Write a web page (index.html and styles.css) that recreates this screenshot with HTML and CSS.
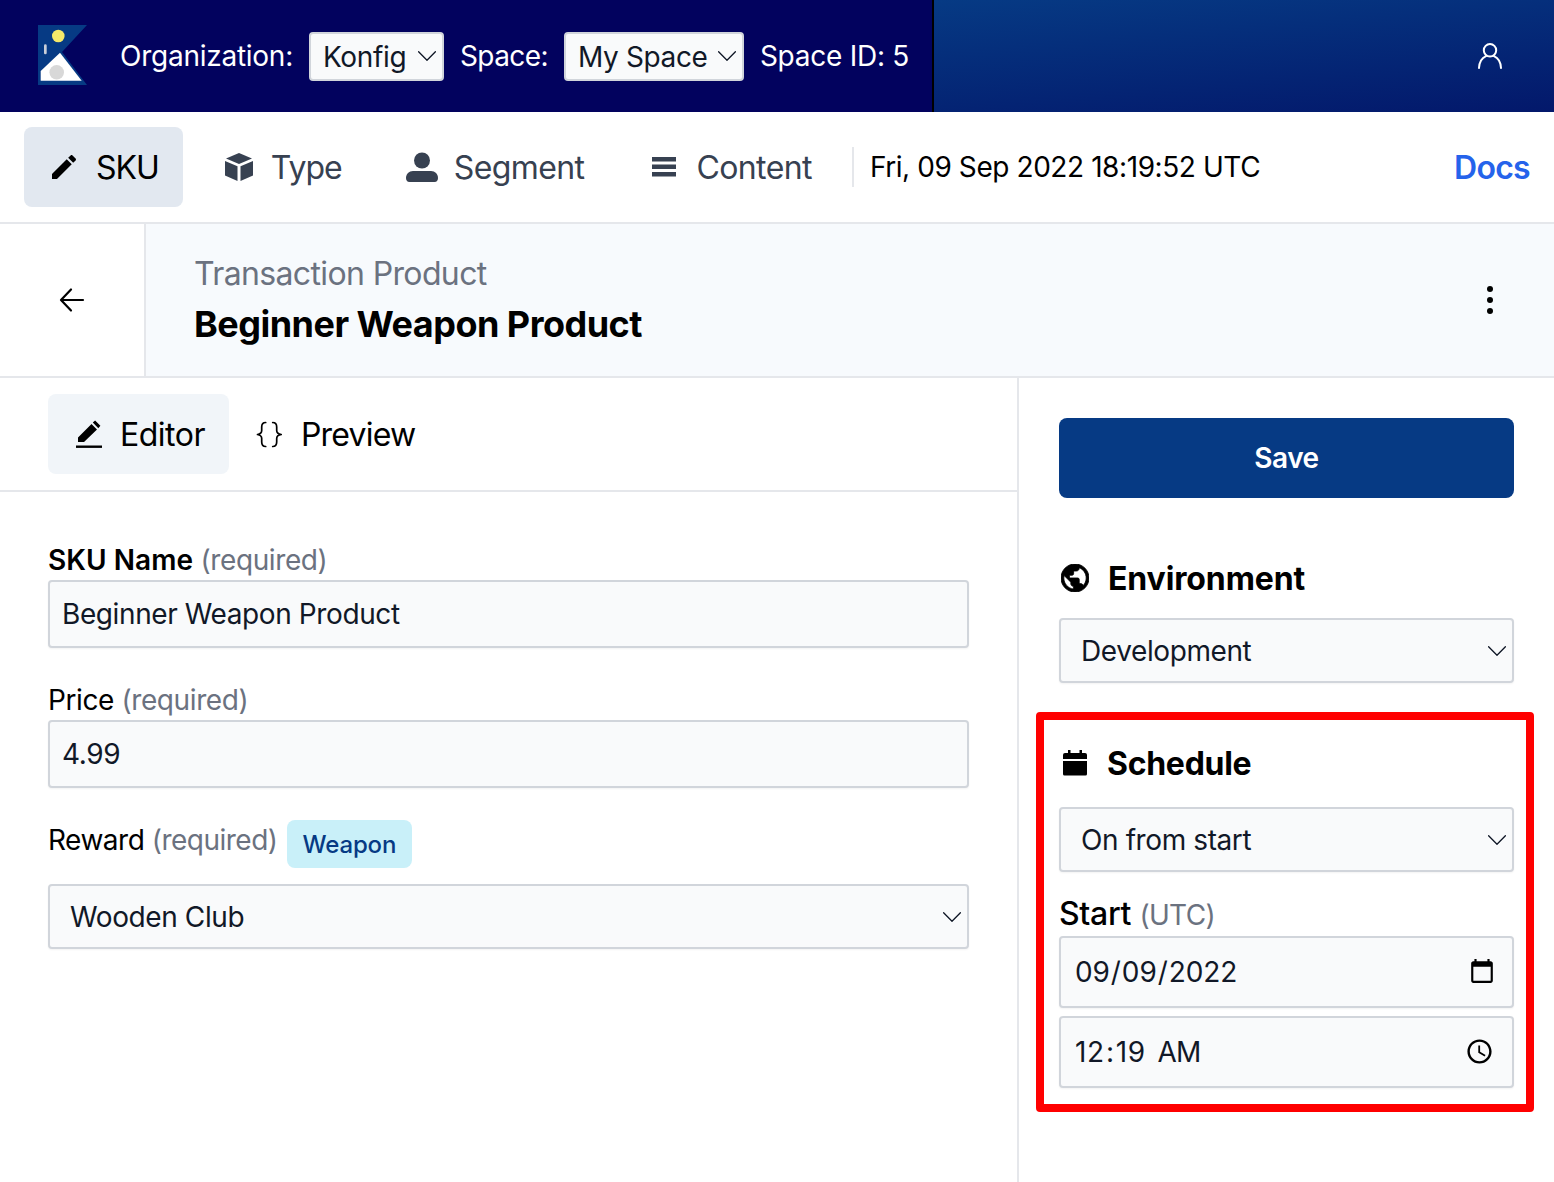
FILE: index.html
```html
<!DOCTYPE html>
<html lang="en">
<head>
<meta charset="utf-8">
<title>Konfig</title>
<link rel="stylesheet" href="styles.css">
</head>
<body>
<header class="topbar">
  <div class="topbar-left">
    <svg class="logo" viewBox="0 0 49 60" width="49" height="60"><polygon points="0,0 49,0 24,27 49,60 0,60" fill="#063a84"/><polygon points="22,27.700 43.700,55.700 2.700,55.700 2.700,46" fill="#fff"/><circle cx="20.300" cy="11" r="6.300" fill="#f5e96a"/><circle cx="18.700" cy="47.300" r="7.300" fill="#d8d8d8"/><rect x="6" y="19.300" width="2.700" height="10" rx="1.300" fill="#c9ced8"/></svg>
    <span class="top-label">Organization:</span>
    <select class="top-select org-select"><option>Konfig</option></select>
    <span class="top-label top-label-space">Space:</span>
    <select class="top-select space-select"><option>My Space</option></select>
    <span class="top-label">Space ID: 5</span>
  </div>
  <div class="topbar-right">
    <svg class="user-icon" viewBox="0 0 24 26" width="24" height="26" fill="none" stroke="#fff" stroke-width="2" stroke-linecap="round"><circle cx="12" cy="7.300" r="6.200"/><path d="M1 25c.3-5.500 3-10 7-11.800M23 25c-.3-5.500-3-10-7-11.800"/></svg>
  </div>
</header>

<nav class="nav">
  <a class="nav-tab nav-tab-active nav-tab-tight">
    <svg class="icon" viewBox="0 0 24 24" width="32" height="32" fill="#000"><path d="M3 17.250V21h3.750L17.810 9.940l-3.750-3.750L3 17.250zM20.710 7.040c.39-.39.39-1.020 0-1.410l-2.340-2.340c-.39-.39-1.020-.39-1.410 0l-1.830 1.830 3.750 3.750 1.830-1.830z"/></svg>
    <span>SKU</span>
  </a>
  <a class="nav-tab nav-tab-tight">
    <svg class="icon" viewBox="0 0 32 32" width="32" height="32" fill="#374151"><path d="M16 2l13 5.500L16 13 3 7.500z"/><path d="M2 10l12.500 5.300V30L2 24.500z"/><path d="M30 10l-12.500 5.300V30L30 24.500z"/></svg>
    <span>Type</span>
  </a>
  <a class="nav-tab">
    <svg class="icon" viewBox="0 0 32 32" width="32" height="32" fill="#374151"><circle cx="16" cy="9.500" r="8"/><path d="M0 27c0-4 3-7 7-7h18c4 0 7 3 7 7 0 2-1 4-3.500 4h-25C1 31 0 29 0 27z"/></svg>
    <span>Segment</span>
  </a>
  <a class="nav-tab">
    <svg class="icon" viewBox="0 0 32 32" width="32" height="32" fill="#374151"><rect x="4" y="6" width="24" height="4.500"/><rect x="4" y="13.500" width="24" height="4.500"/><rect x="4" y="21" width="24" height="4.500"/></svg>
    <span>Content</span>
  </a>
  <div class="nav-divider"></div>
  <span class="nav-date">Fri, 09 Sep 2022 18:19:52 UTC</span>
  <a class="docs">Docs</a>
</nav>

<section class="subheader">
  <div class="back">
    <svg viewBox="0 0 28 28" width="28" height="28" fill="none" stroke="#000" stroke-width="2.200" stroke-linecap="round" stroke-linejoin="round"><path d="M25 14H3.500M13 3.500L3 14l10 10.500"/></svg>
  </div>
  <div class="subheader-main">
    <div class="subheader-text">
      <div class="crumb">Transaction Product</div>
      <h1 class="title">Beginner Weapon Product</h1>
    </div>
    <svg class="more" viewBox="0 0 32 32" width="32" height="32" fill="#000"><circle cx="16" cy="5" r="3"/><circle cx="16" cy="16" r="3"/><circle cx="16" cy="27" r="3"/></svg>
  </div>
</section>

<main class="main">
  <div class="editor">
    <div class="editor-tabs">
      <a class="editor-tab editor-tab-active">
        <svg class="icon" viewBox="0 0 32 32" width="32" height="32"><path d="M7 21.500L20.500 8l5.500 5.500L13 26H7zM21.800 6.600l2.300-2.200 5.300 5.400-2.100 2.400z" fill="#000" transform="translate(-1 -2)"/><rect x="4" y="27.500" width="26" height="2.400" fill="#000"/></svg>
        <span>Editor</span>
      </a>
      <a class="editor-tab editor-tab-tight">
        <svg class="icon" viewBox="0 0 32 32" width="32" height="32" fill="none" stroke="#000" stroke-width="1.700" stroke-linecap="round" stroke-linejoin="round"><path d="M12.700 4.500C9.700 4.500 8.700 6 8.700 9v3.500c0 2-1.300 3.500-4.200 4 2.900.5 4.200 2 4.200 4V24c0 3 1 4.500 4 4.500M19.700 4.500c3 0 4 1.500 4 4.500v3.500c0 2 1.300 3.500 4.500 4-3.200.5-4.500 2-4.500 4V24c0 3-1 4.500-4 4.500"/></svg>
        <span>Preview</span>
      </a>
    </div>
    <form class="form">
      <div class="field">
        <label class="label"><strong>SKU Name</strong> <span class="hint">(required)</span></label>
        <input class="input input-tall" type="text" value="Beginner Weapon Product">
      </div>
      <div class="field">
        <label class="label">Price <span class="hint">(required)</span></label>
        <input class="input input-tall" type="text" value="4.99">
      </div>
      <div class="field">
        <div class="label-row">
          <label class="label label-tight">Reward <span class="hint">(required)</span></label>
          <span class="badge">Weapon</span>
        </div>
        <select class="select"><option>Wooden Club</option></select>
      </div>
    </form>
  </div>

  <aside class="side">
    <button class="save" type="button">Save</button>
    <section class="env">
      <h2 class="side-heading side-heading-env">
        <svg class="icon-heading" viewBox="2 2 20 20" width="28" height="28" fill="#000" stroke="#000" stroke-width=".6"><path d="M12 2C6.480 2 2 6.480 2 12s4.480 10 10 10 10-4.480 10-10S17.520 2 12 2zm-1 17.930c-3.950-.49-7-3.850-7-7.930 0-.62.080-1.210.210-1.790L9 15v1c0 1.100.9 2 2 2v1.930zm6.900-2.540c-.26-.81-1-1.390-1.900-1.390h-1v-3c0-.55-.45-1-1-1H8v-2h2c.55 0 1-.45 1-1V7h2c1.100 0 2-.9 2-2v-.41c2.930 1.190 5 4.060 5 7.410 0 2.080-.8 3.970-2.100 5.390z"/></svg>
        <span>Environment</span>
      </h2>
      <select class="select"><option>Development</option></select>
    </section>
    <section class="schedule">
      <h2 class="side-heading">
        <svg class="icon-heading" viewBox="0 0 28 28" width="28" height="28" fill="#000"><rect x="7" y="1" width="2.500" height="5"/><rect x="18.500" y="1" width="2.500" height="5"/><path d="M2 6a2 2 0 0 1 2-2h20a2 2 0 0 1 2 2v4H2z"/><path d="M2 12h24v13a1.500 1.500 0 0 1-1.500 1.500h-21A1.500 1.500 0 0 1 2 25z"/></svg>
        <span>Schedule</span>
      </h2>
      <select class="select"><option>On from start</option></select>
      <label class="label start-label">Start <span class="hint start-hint">(UTC)</span></label>
      <input class="picker picker-date" type="date" value="2022-09-09">
      <input class="picker picker-time" type="time" value="00:19">
    </section>
  </aside>
</main>
</body>
</html>
```

FILE: styles.css
```css
* { box-sizing: border-box; }
html, body { margin: 0; padding: 0; }
body {
  font-family: Inter, "Liberation Sans", sans-serif;
  color: #000;
  background: #fff;
  height: 1182px;
  overflow: hidden;
}
a { text-decoration: none; color: inherit; }
h1, h2 { margin: 0; }

/* top bar */
.topbar { display: flex; height: 112px; }
.topbar-left {
  width: 934px;
  display: flex;
  align-items: center;
  padding-left: 38px;
  background: #02025e;
  border-right: 2px solid #000;
  color: #fff;
}
.logo { margin-right: 33px; flex: none; margin-top: -2px; }
.top-label { font-size: 28px; line-height: 40px; letter-spacing: -.25px; }
.top-label-space { letter-spacing: -.6px; }
.top-select {
  appearance: none;
  height: 49px;
  font: 28px Inter, sans-serif;
  letter-spacing: -.35px;
  color: #111827;
  background-color: #f9fafb;
  background-image: url("data:image/svg+xml,%3Csvg xmlns='http://www.w3.org/2000/svg' viewBox='0 0 20 20' fill='none' stroke='%23111827' stroke-width='1.100' stroke-linecap='round' stroke-linejoin='round'%3E%3Cpath d='M3 6.500l7 7 7-7'/%3E%3C/svg%3E");
  background-repeat: no-repeat;
  background-size: 24px 24px;
  background-position: right 3px center;
  border: 2px solid #d1d5db;
  border-radius: 4px;
  padding: 2px 32px 0 12px;
  margin: 0 16px;
}
.org-select { width: 135px; }
.space-select { width: 180px; }
.topbar-right {
  flex: 1;
  display: flex;
  align-items: center;
  justify-content: flex-end;
  padding-right: 52px;
  background: linear-gradient(175deg, #063a84 0%, #03186b 100%);
}

/* nav */
.nav {
  height: 112px;
  display: flex;
  align-items: center;
  gap: 16px;
  padding: 0 24px;
  border-bottom: 2px solid #e5e7eb;
}
.nav-tab {
  display: flex;
  align-items: center;
  gap: 16px;
  height: 80px;
  padding: 0 24px;
  border-radius: 8px;
  font-size: 32px;
  letter-spacing: -.6px;
  font-weight: 400;
  color: #374151;
}
.nav-tab span, .editor-tab span { padding-top: 1px; }
.nav-tab-tight { letter-spacing: -1px; }
.nav-tab-active { background: #e2e8f0; color: #000; }
.icon { flex: none; }
.nav-divider { width: 2px; height: 40px; background: #e5e7eb; }
.nav-date { font-size: 28px; letter-spacing: -.42px; }
.docs { margin-left: auto; font-size: 32px; letter-spacing: -.7px; font-weight: 600; color: #2563eb; }

/* sub header */
.subheader {
  height: 154px;
  display: flex;
  border-bottom: 2px solid #e5e7eb;
}
.back {
  width: 146px;
  flex: none;
  display: flex;
  align-items: center;
  justify-content: center;
  border-right: 2px solid #e5e7eb;
}
.subheader-main {
  flex: 1;
  display: flex;
  align-items: center;
  justify-content: space-between;
  padding: 0 48px;
  background: #f7fafd;
}
.crumb { font-size: 32px; line-height: 48px; letter-spacing: -.63px; color: #6b7280; }
.title { font-size: 36px; line-height: 52px; letter-spacing: -.52px; font-weight: 700; }

/* main */
.main { display: flex; height: 804px; }
.editor { width: 1019px; flex: none; border-right: 2px solid #e5e7eb; }
.editor-tabs {
  display: flex;
  height: 114px;
  padding: 16px 48px;
  border-bottom: 2px solid #e5e7eb;
}
.editor-tab {
  display: flex;
  align-items: center;
  gap: 16px;
  height: 80px;
  padding: 0 24px;
  border-radius: 8px;
  font-size: 32px;
  letter-spacing: -.5px;
}
.editor-tab-tight { letter-spacing: -.8px; }
.editor-tab-active { background: #f1f5f9; }

.form {
  display: flex;
  flex-direction: column;
  gap: 32px;
  padding: 48px 48px 0;
}
.field { display: flex; flex-direction: column; width: 921px; }
.label { display: block; height: 40px; font-size: 28px; line-height: 40px; letter-spacing: -.4px; }
.label-tight { letter-spacing: -.5px; }
.label strong { font-weight: 600; letter-spacing: .05px; }
.hint { color: #6b7280; }
.label-row { display: flex; gap: 9px; margin-bottom: 16px; }
.badge {
  display: flex;
  align-items: center;
  height: 48px;
  padding: 0 16px;
  border-radius: 8px;
  background: #c9f0f9;
  color: #063a84;
  font-size: 24px;
  letter-spacing: -.15px;
  font-weight: 500;
}
.input {
  width: 100%;
  font: 28px Inter, sans-serif;
  letter-spacing: -.4px;
  color: #111827;
  background: #f9fafb;
  border: 2px solid #d1d5db;
  border-radius: 4px;
  padding: 0 12px;
  box-shadow: 0 1px 2px rgba(0, 0, 0, .05);
}
.input-tall { height: 68px; }
.select {
  appearance: none;
  display: block;
  width: 100%;
  height: 65px;
  font: 28px Inter, sans-serif;
  letter-spacing: -.4px;
  color: #111827;
  background-color: #f9fafb;
  background-image: url("data:image/svg+xml,%3Csvg xmlns='http://www.w3.org/2000/svg' viewBox='0 0 20 20' fill='none' stroke='%23111827' stroke-width='1.100' stroke-linecap='round' stroke-linejoin='round'%3E%3Cpath d='M3 6.500l7 7 7-7'/%3E%3C/svg%3E");
  background-repeat: no-repeat;
  background-size: 24px 24px;
  background-position: right 3px center;
  border: 2px solid #d1d5db;
  border-radius: 4px;
  padding: 1px 32px 0 20px;
  box-shadow: 0 1px 2px rgba(0, 0, 0, .05);
}

/* side */
.side { width: 535px; flex: none; padding: 40px 40px 0; }
.save {
  display: block;
  width: 100%;
  height: 80px;
  border: 0;
  border-radius: 8px;
  padding: 0;
  background: #063a84;
  color: #fff;
  font: 600 28px Inter, sans-serif;
  letter-spacing: -.5px;
}
.env { margin-top: 60px; }
.side-heading {
  display: flex;
  align-items: center;
  gap: 18px;
  height: 40px;
  margin-bottom: 20px;
  font-size: 32px;
  letter-spacing: -.28px;
  font-weight: 700;
}
.side-heading-env { gap: 19px; letter-spacing: -.12px; }
.icon-heading { flex: none; margin-left: 2px; }
.schedule {
  margin: 29px -20px 0 -23px;
  padding: 23px 12px 16px 15px;
  border: 8px solid #f00;
  border-radius: 4px;
  background: #fff;
}
.schedule .side-heading { margin-bottom: 24px; }
.start-label { margin-top: 21px; height: 43px; font-size: 32px; font-weight: 500; line-height: 42px; letter-spacing: -.3px; }
.start-hint { font-size: 28px; font-weight: 400; letter-spacing: -.7px; }
.picker {
  display: block;
  width: 100%;
  height: 72px;
  margin-top: 8px;
  font: 28px Inter, sans-serif;
  color: #111827;
  background: #f9fafb;
  border: 2px solid #d1d5db;
  border-radius: 4px;
  box-shadow: 0 1px 2px rgba(0, 0, 0, .05);
}
.picker-date { padding: 0 14px 0 13px; letter-spacing: -.1px; }
.picker-time { padding: 0 15px 0 13px; letter-spacing: .7px; }
.picker-time::-webkit-datetime-edit-ampm-field { margin-left: 4px; letter-spacing: -1px; }
.start-label + .picker { margin-top: 0; }
```
